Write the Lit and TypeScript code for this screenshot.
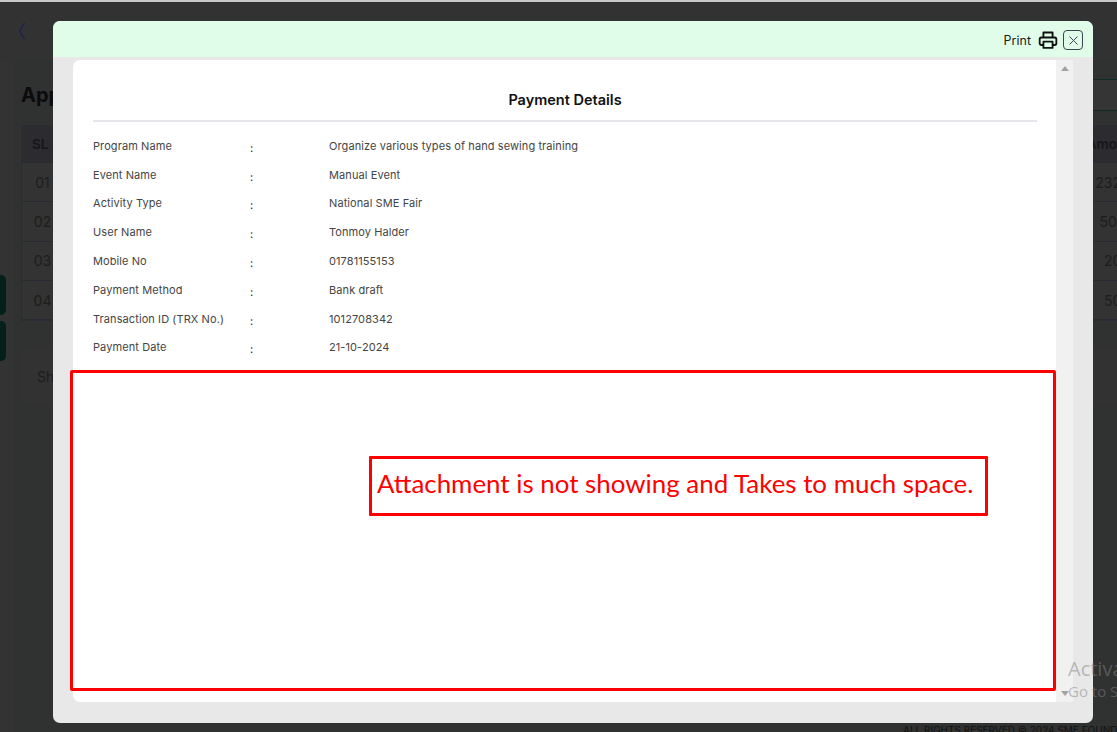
import { LitElement, html, css } from "lit";
import { customElement } from "lit/decorators.js";

const details: [string, string][] = [
  ["Program Name", "Organize various types of hand sewing training"],
  ["Event Name", "Manual Event"],
  ["Activity Type", "National SME Fair"],
  ["User Name", "Tonmoy Halder"],
  ["Mobile No", "01781155153"],
  ["Payment Method", "Bank draft"],
  ["Transaction ID (TRX No.)", "1012708342"],
  ["Payment Date", "21-10-2024"],
];
const rows: [string, string][] = [
  ["01", "23200"],
  ["02", "5000"],
  ["03", "200"],
  ["04", "500"],
];

@customElement("app-root")
export class AppRoot extends LitElement {
  static styles = css`
    :host {
      display: block;
      position: relative;
      width: 1117px;
      height: 732px;
      overflow: hidden;
      background: #333333;
      font-family: Inter, "Liberation Sans", sans-serif;
    }
    * { box-sizing: border-box; }
    .page {
      height: 732px;
      border-top: 2px solid #c9c9c9;
      display: flex;
      flex-direction: column;
      width: 1200px;
    }
    .topbar {
      height: 58px;
      padding: 19px 0 0 17px;
      flex: none;
      background: #323232;
    }
    .topbar svg { display: block; width: 10px; height: 20px; }
    .main {
      flex: 1;
      margin-left: 14px;
      padding: 0 0 0 7px;
      background: #303131;
      border-radius: 6px 0 0 0;
    }
    .title-row {
      width: 1096px;
      height: 65px;
      display: flex;
      justify-content: space-between;
      align-items: flex-start;
    }
    h1 {
      margin: 22px 0 0;
      font-size: 20px;
      line-height: 27px;
      font-weight: 700;
      color: #0b0b0b;
    }
    .filter {
      margin-top: 19px;
      width: 300px;
      height: 32px;
      background: #353535;
      border-top: 1px solid #0f2a26;
      border-bottom: 1px solid #0f2a26;
    }
    .table { width: 1130px; border: 1px solid #2b2b33; border-top: 0; }
    .tr {
      display: grid;
      grid-template-columns: 41px 1fr 60px;
      align-items: center;
      height: 39.3px;
      border-bottom: 1px solid #2a2a33;
      font-size: 14px;
      color: #1d1d1d;
      background: #333333;
    }
    .tr.head {
      height: 38px;
      background: #2b2b30;
      color: #161618;
      font-weight: 600;
      font-size: 13.5px;
    }
    .tr > :first-child { text-align: center; }
    .tr > :last-child { text-align: center; margin-right: 6px; white-space: nowrap; }
    .tr.head > :first-child { text-align: left; padding-left: 10px; }
    .tr.head > :last-child { margin-left: -5px; margin-right: 10px; }
    .foot {
      margin-top: 26px;
      height: 58px;
      width: 1130px;
      background: #323232;
      padding: 21px 0 0 16px;
      font-size: 14px;
      line-height: 17px;
      color: #1d1d1d;
    }
    .side {
      position: absolute;
      left: 0;
      width: 6px;
      height: 40px;
      background: #05201b;
      border-radius: 0 5px 5px 0;
    }
    .copyright {
      position: absolute;
      left: 903px;
      top: 724px;
      font-size: 10px;
      line-height: 12px;
      color: #111;
      white-space: nowrap;
    }
    .modal {
      position: absolute;
      left: 53px;
      top: 21px;
      width: 1040px;
      height: 702px;
      background: #e8e8e8;
      border-radius: 7px;
      display: flex;
      flex-direction: column;
      overflow: hidden;
    }
    .modal-head {
      flex: none;
      height: 36px;
      background: #e0fdea;
      display: flex;
      align-items: center;
      justify-content: flex-end;
      padding: 2px 10px 0 0;
    }
    .print { font-size: 12.5px; color: #1c1c1c; margin-right: 7px; }
    .print-icon { width: 20px; height: 20px; display: block; margin-right: 5px; }
    .close {
      width: 20px;
      height: 20px;
      border: 1.5px solid #3c4450;
      border-radius: 4px;
      display: flex;
      align-items: center;
      justify-content: center;
    }
    .close svg { width: 9px; height: 9px; display: block; }
    .scroller {
      flex: none;
      margin: 3px 0 0 20px;
      width: 1000px;
      height: 642px;
      display: flex;
    }
    .content {
      flex: none;
      width: 983px;
      height: 642px;
      background: #fff;
      border-radius: 7px 0 0 7px;
      padding: 30px 19px 0 20px;
    }
    .track {
      flex: none;
      width: 17px;
      background: #f1f1f1;
      display: flex;
      flex-direction: column;
      justify-content: space-between;
      align-items: center;
      padding: 6px 0;
    }
    .arrow { width: 0; height: 0; border-left: 4px solid transparent; border-right: 4px solid transparent; }
    .arrow.up { border-bottom: 5px solid #a3a3a3; }
    .arrow.down { border-top: 5px solid #a3a3a3; }
    h2 {
      margin: 0;
      height: 32px;
      border-bottom: 2px solid #e5e5ea;
      text-align: center;
      font-size: 14.5px;
      line-height: 20px;
      font-weight: 600;
      color: #111;
    }
    .details { padding-top: 9.95px; }
    .row {
      display: grid;
      grid-template-columns: 157px 79px 1fr;
      height: 28.78px;
      font-size: 11px;
      line-height: 28.6px;
      color: #454545;
      letter-spacing: 0.09px;
    }
    .colon { position: relative; top: 2px; color: #222; }
    .annot-outer {
      position: absolute;
      left: 70px;
      top: 370px;
      width: 986px;
      height: 321px;
      border: 3px solid #ff0000;
      border-radius: 2px;
    }
    .annot-inner {
      position: absolute;
      left: 369px;
      top: 456px;
      width: 619px;
      height: 60px;
      border: 3px solid #ff0000;
      border-radius: 1px;
      padding-left: 5px;
      font-family: Lato, "Open Sans", sans-serif;
      font-size: 25.9px;
      line-height: 49px;
      color: #ff0000;
      white-space: nowrap;
    }
    .watermark {
      position: absolute;
      left: 1068px;
      top: 656px;
      font-family: "Open Sans", "Liberation Sans", sans-serif;
      color: rgba(130, 130, 130, 0.5);
      white-space: nowrap;
      pointer-events: none;
    }
    .watermark div:first-child { font-size: 20px; line-height: 26px; }
    .watermark div:last-child { font-size: 15px; line-height: 18px; }
  `;

  render() {
    return html`
      <div class="page">
        <div class="topbar">
          <svg viewBox="0 0 10 20" fill="none" stroke="#1c2050" stroke-width="1.4"><path d="M7.5 2 L2.5 10 L7.5 18" /></svg>
        </div>
        <div class="main">
          <div class="title-row">
            <h1>Applications</h1>
            <div class="filter"></div>
          </div>
          <div class="table">
            <div class="tr head"><span>SL</span><span></span><span>Amount</span></div>
            ${rows.map((r) => html`<div class="tr"><span>${r[0]}</span><span></span><span>${r[1]}</span></div>`)}
          </div>
          <div class="foot">Showing</div>
        </div>
      </div>
      <div class="side" style="top:275px"></div>
      <div class="side" style="top:321px"></div>
      <div class="copyright">ALL RIGHTS RESERVED © 2024 SME FOUNDATION</div>

      <div class="modal">
        <div class="modal-head">
          <span class="print">Print</span>
          <svg class="print-icon" viewBox="0 0 24 24" fill="none" stroke="#111" stroke-width="2.2" stroke-linejoin="round">
            <path d="M6.5 9V3h11v6" />
            <path d="M6.5 18H4a2 2 0 0 1-2-2v-5a2 2 0 0 1 2-2h16a2 2 0 0 1 2 2v5a2 2 0 0 1-2 2h-2.5" />
            <rect x="6.5" y="14" width="11" height="7.5" />
          </svg>
          <div class="close">
            <svg viewBox="0 0 9 9" stroke="#3c4450" stroke-width="1" fill="none"><path d="M0.5 0.5 L8.5 8.5 M8.5 0.5 L0.5 8.5" /></svg>
          </div>
        </div>
        <div class="scroller">
          <div class="content">
            <h2>Payment Details</h2>
            <div class="details">
              ${details.map(
                (d) => html`<div class="row"><span>${d[0]}</span><span class="colon">:</span><span>${d[1]}</span></div>`
              )}
            </div>
          </div>
          <div class="track"><div class="arrow up"></div><div class="arrow down"></div></div>
        </div>
      </div>

      <div class="annot-outer"></div>
      <div class="annot-inner">Attachment is not showing and Takes to much space.</div>
      <div class="watermark"><div>Activate Windows</div><div>Go to Settings to activate Windows.</div></div>
    `;
  }
}
